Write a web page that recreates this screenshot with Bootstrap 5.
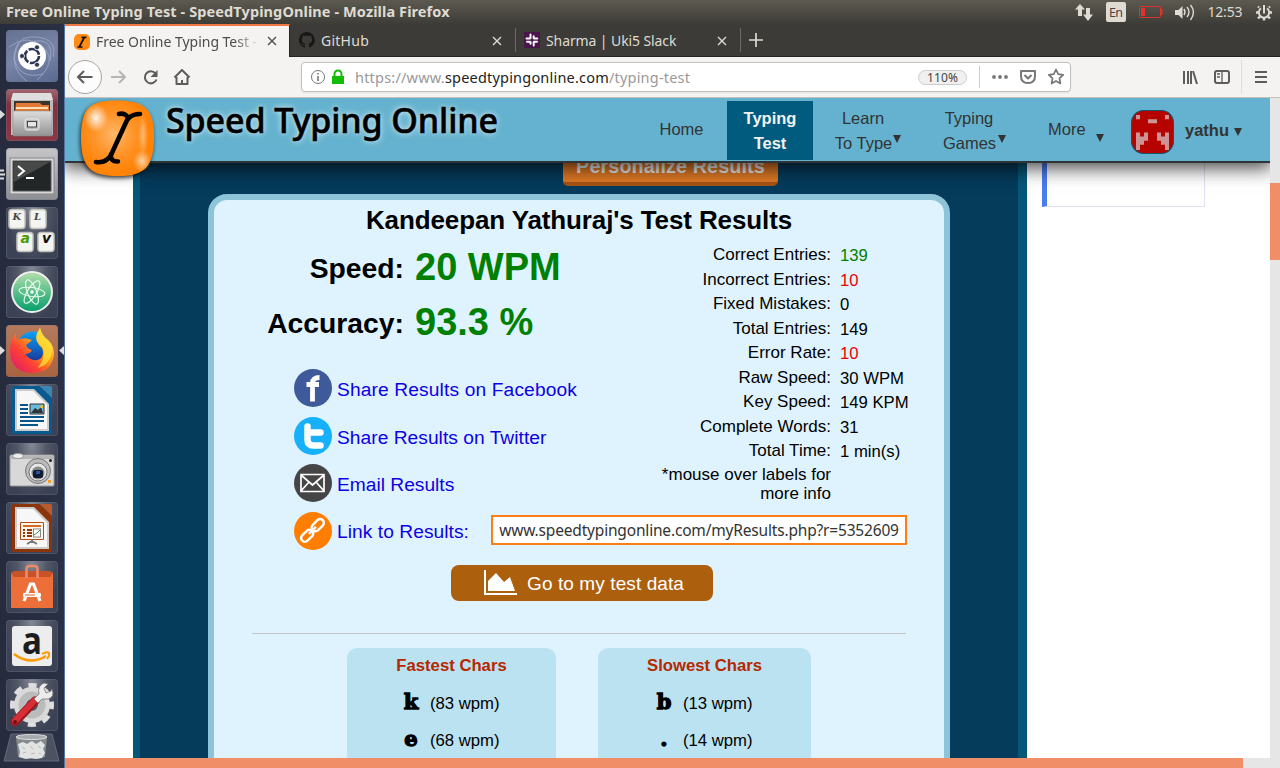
<!DOCTYPE html>
<html lang="en">
<head>
<meta charset="utf-8">
<meta name="viewport" content="width=device-width, initial-scale=1">
<title>Free Online Typing Test - SpeedTypingOnline</title>
<link href="https://cdn.jsdelivr.net/npm/bootstrap@5.3.0/dist/css/bootstrap.min.css" rel="stylesheet">
<style>
body{width:1280px;height:768px;overflow:hidden;font-family:"Liberation Sans",Arial,sans-serif;color:#000;background:#fff;line-height:1.2}
svg{display:block;flex:none;overflow:visible}
.ui{font-family:"Noto Sans","Open Sans",sans-serif}
.panel-top{height:24px;background:linear-gradient(#5c5a50,#3d3c37);color:#dfdbd2;padding-left:6px;padding-right:7px}
.panel-top .wtitle{font-weight:700;font-size:14.5px;letter-spacing:.1px;white-space:nowrap}
.dock{width:65px;height:744px;background:linear-gradient(90deg,#262b3e,#2a3045);border-right:1px solid #5576a5;padding:6px 0 0 6px;gap:7px}
.tile{width:52px;height:52px;border-radius:4px;position:relative;background:radial-gradient(ellipse at 50% 0,#858998 0,#525767 40%,#3c4255 75%);box-shadow:inset 0 0 0 1px #70758555}
.tile.bfb{background:linear-gradient(160deg,#64718f,#7985a8 50%,#596991)}
.tile.files{background:linear-gradient(#a26872,#823140 30%,#8d3644)}
.tile.term{background:linear-gradient(#c6c6c8,#8e8f94)}
.tile.fox{background:linear-gradient(#b77a5d,#a9633f)}
.pip{position:absolute;left:-6px;top:21px}
.pip-r{position:absolute;left:53px;top:21px}
.bin{margin-top:-5px;margin-left:-3px}
.tabs{height:33px;background:#3c3b37;border-bottom:1px solid #252421;color:#dfdbd2;font-size:14px}
.tab-item{width:225px;padding-left:9px;position:relative;height:32px}
.tab-item .lbl{margin-left:6px;white-space:nowrap;letter-spacing:-.1px;line-height:20px}
.tab-item .x{position:absolute;left:202px;top:12px}
.tab-item.on{background:#f4f3f2;color:#4c4c4c;height:33px;border-top:2px solid #f07746;border-right:1px solid #252421;width:225px}
.tab-item.on .lbl{width:163px;letter-spacing:-.02px;-webkit-mask-image:linear-gradient(90deg,#000 85%,transparent)}
.tab-item.on .x{top:10px}
.vsep{width:1px;height:24px;background:#6b6965}
.toolbar{height:41px;background:#f4f3f2;border-bottom:1px solid #c4c0bb;padding-left:3px}
.backbtn{width:34px;height:34px;border:1px solid #a5a5a5;border-radius:50%;background:#fcfcfc}
.urlbar{width:770px;height:30px;background:#fff;border:1px solid #c3c1be;border-radius:4px;margin-left:99px;padding-left:9px;font-size:14.5px;color:#999;box-shadow:0 1px 2px #0001}
.urlbar b{font-weight:400;color:#222}
.urltxt{margin-left:10px;width:563px;letter-spacing:.2px;white-space:nowrap;padding-top:1px}
.zoomlvl{width:49px;height:15px;border:1px solid #ccc;border-radius:8px;background:#f0f0f0;color:#444;font-size:12px;line-height:14px;letter-spacing:.1px}
.view{width:1205px;height:660px;position:relative;overflow:hidden;background:#fff}
.vscroll{width:10px;height:660px;background:#e6e6e6;padding-top:85px}
.vscroll div{height:77px;background:#f08e67}
.hscroll{height:10px;background:#e6e6e6}
.hscroll div{width:1178px;height:10px;background:#f08e67}
.site-head{position:absolute;left:0;top:0;width:1205px;height:65px;background:#64b2cf;border-bottom:2px solid #2f3436;box-shadow:0 3px 18px 2px #000b;z-index:5;color:#333;font-size:16.5px;line-height:25px;padding-left:13px}
.brand-txt{font-family:"Noto Sans","Open Sans",sans-serif;font-weight:500;font-size:34px;line-height:46px;margin-top:-1px;letter-spacing:-.1px;color:#000;margin-left:8px;width:400px;text-shadow:0 0 5px #fff9,0 0 8px #fff8;-webkit-text-stroke:.6px #000;white-space:nowrap}
.m-cur{width:86px;height:59px;background:#005b7f;color:#f2f2f2;font-weight:700;padding-top:5px}
.m-two{padding-top:8px}
.down{display:inline-block;width:0;height:0;border:4.5px solid transparent;border-top:8px solid #333;border-bottom:0}
.site-body{margin-left:68px;width:894px;height:660px;background:#053b5b;border-left:7px solid #055777;border-right:9px solid #055777;padding-left:68px}
.personal{margin-left:355px;width:215px;height:88px;background:#dd7826;border-bottom:4px solid #a65315;border-radius:5px;color:#eee;font-weight:700;font-size:19.8px;line-height:24px;padding-top:56px;text-align:center;letter-spacing:.1px}
.results{width:742px;height:600px;margin-top:8px;border:6px solid #8ec4d8;border-radius:19px;background:#dff3ff}
.results h1{font-size:26px;font-weight:700;height:40px;padding-top:4px;margin:0;line-height:32px;letter-spacing:-.12px;text-align:center}
.big{height:55px}
.big .k{width:190px;text-align:right;font-weight:700;font-size:28.3px;padding-top:3px}
.big .v{margin-left:11px;color:green;font-weight:700;font-size:38px}
.share{height:47.7px;margin-left:80px;color:#0d00e6;font-size:19.2px;letter-spacing:.13px}
.share span{margin-left:5px;padding-top:2px}
.stats{width:310px;font-size:17px;padding-top:3px}
.stats .r{height:24.5px}
.stats .k{width:197px;text-align:right}
.stats .v{margin-left:9px;padding-top:2px;font-size:16.7px}
.note{width:197px;text-align:right;font-size:17px;line-height:19px;padding-top:1px}
.linkbox{width:416px;height:30px;border:2px solid #ff7e14;background:#fff;color:#333;font-size:15.5px;line-height:27px;text-align:center;white-space:nowrap;letter-spacing:-.18px;margin-top:-2px}
.godata{width:262px;height:36px;border-radius:8px;background:#ac5f0d;color:#fff;font-size:19px;margin:10px 0 0 237px;padding-left:33px;letter-spacing:.1px}
.rule{height:1px;background:#c6c6c6;margin:32px 38px 14px}
.chars{height:200px;background:#bbe2f0;border-radius:10px 10px 0 0;font-size:16.7px}
.chars h2{font-size:16.7px;font-weight:700;color:#b52800;text-align:center;margin:0;padding-top:8px;height:38px;line-height:20px}
.chars .c{height:37px}
.glyph{width:24px;text-align:center;font-family:"DejaVu Serif",serif;font-weight:700;font-size:21px;line-height:24px;margin-top:-6px;-webkit-text-stroke:1.3px #000}
.adbox{position:absolute;left:977px;top:40px;width:163px;height:69px;border:1px solid #e0e0f2;border-left:5px solid #4a7cf0}
</style>
</head>
<body>
<div class="panel-top d-flex align-items-center ui">
  <div class="wtitle flex-grow-1">Free Online Typing Test - SpeedTypingOnline - Mozilla Firefox</div>
  <svg width="198" height="24" viewBox="0 0 198 24">
    <g fill="#dfdbd2"><path d="M0 9.500 5 4l5 5.500H7V16H3V9.500zM8 14.500h3V8h4v6.500h3L13 21z"/><rect x="31" y="2" width="20" height="20" rx="2"/>
    <path d="M100 10h3.500l4-4v13l-4-4H100z"/></g>
    <text x="34" y="17" font-size="12.500" textLength="14" fill="#444">En</text>
    <rect x="64.500" y="6.500" width="21" height="11" rx="1" fill="none" stroke="#e0322b"/><path d="M66 8h4v8h-4zM86 9h1.500v6H86z" fill="#e0322b"/>
    <path d="M109 9q2 3 0 6M112 7q4 5 0 10M115.500 5q6 7 0 15" fill="none" stroke="#dfdbd2" stroke-width="1.400"/>
    <text x="132.500" y="17" font-size="14" textLength="35" fill="#dfdbd2">12:53</text>
    <g transform="translate(189 12.500)" stroke="#dfdbd2" fill="none"><path d="M-3-4.200A5.200 5.200 0 1 0 3-4.200" stroke-width="2"/><path d="M0-7.500V1" stroke-width="2"/><path d="M-5-5-6-6M5-5 6-6M-8 0h2M6 0h2M-4 4-6 6M4 4 6 6M0 5v3" stroke-width="2.400"/></g>
  </svg>
</div>
<div class="d-flex">
  <aside class="dock d-flex flex-column flex-shrink-0">
    <div class="tile bfb"><svg width="52" height="52"><g fill="none" stroke="#a7b0cc" stroke-width="1" opacity=".7"><path d="M3 17Q22 3 37 17T31 50M8 30Q8 5 30 7T47 27M8 28Q13 50 37 44M13 13Q1 37 21 51M24 12Q49 6 44 31"/></g><circle cx="26" cy="26" r="14" fill="#fff"/><circle cx="26" cy="26" r="7" fill="none" stroke="#2c3554" stroke-width="2.600" stroke-dasharray="13 1.660"/><g fill="#2c3554" stroke="#fff" stroke-width=".8"><circle cx="16" cy="26" r="2.500"/><circle cx="31" cy="17.300" r="2.500"/><circle cx="31" cy="34.700" r="2.500"/></g></svg></div>
    <div class="tile files"><svg class="pip" width="6" height="9"><path d="M0 0 5 4.500 0 9z" fill="#ddd"/></svg><svg width="52" height="52"><defs><linearGradient id="gr" x2="0" y2="1"><stop stop-color="#ddd"/><stop offset="1" stop-color="#929292"/></linearGradient></defs><path d="M7 4h38l2 8v34H5V12z" fill="#bbb"/><path d="M7 4h38l2 7H5z" fill="#dedede"/><path d="M8 12h36v12H8z" fill="#3c342f"/><path d="M10 14h24l2 2h7v7H9z" fill="#e17a36"/><path d="M10 18h32v2H10z" fill="#ffe0b6"/><path d="M7 22h39v25H7z" fill="url(#gr)" stroke="#888" stroke-width=".5"/><rect x="19" y="30" width="14" height="11" rx="2" fill="#bbb" stroke="#eee"/><rect x="21.500" y="32.500" width="9" height="5.500" fill="#e6e6e6" stroke="#444"/></svg></div>
    <div class="tile term"><svg class="pip" width="6" height="11"><path d="M0 1.500h4M0 5.500h5M0 9.500h4" stroke="#ddd" stroke-width="2"/></svg><svg width="52" height="52"><rect x="4" y="10" width="44" height="36" fill="#d6d6d6" stroke="#888"/><rect x="7" y="13" width="38" height="30" fill="#232626" stroke="#555"/><path d="M8 14h36L8 34z" fill="#474949"/><path d="M12 18l6 5-6 5M20 30h8" fill="none" stroke="#fff" stroke-width="2"/></svg></div>
    <div class="tile"><svg width="52" height="52" font-family="DejaVu Serif,serif" font-weight="700" font-style="italic" font-size="11"><g fill="#f4f4f0" stroke="#c1c3ba" stroke-width="1.500"><rect x="3" y="2.500" width="16" height="19" rx="3"/><rect x="24" y="2.500" width="16" height="19" rx="3"/><rect x="11" y="25.500" width="16" height="19" rx="3"/><rect x="32" y="25.500" width="16" height="19" rx="3"/></g><g fill="#444"><text x="6.500" y="13" font-size="10">K</text><text x="28" y="13" font-size="10">L</text><text x="14.500" y="36" font-size="14" font-family="DejaVu Sans,sans-serif" fill="#499b05">a</text><text x="36" y="36" font-size="14" font-family="DejaVu Sans,sans-serif" fill="#111">v</text></g></svg></div>
    <div class="tile"><svg width="52" height="52"><defs><linearGradient id="at" x2="0" y2="1"><stop stop-color="#b5dfab"/><stop offset="1" stop-color="#039e6b"/></linearGradient></defs><circle cx="26" cy="26" r="20" fill="url(#at)" stroke="#eee" stroke-width="2"/><g fill="none" stroke="#e9fff0" stroke-width="1.100"><ellipse cx="26" cy="26" rx="13" ry="4.500" transform="rotate(8 26 26)"/><ellipse cx="26" cy="26" rx="13" ry="4.500" transform="rotate(68 26 26)"/><ellipse cx="26" cy="26" rx="13" ry="4.500" transform="rotate(122 26 26)"/></g><circle cx="26" cy="26" r="1.700" fill="#fff"/></svg></div>
    <div class="tile fox"><svg class="pip" width="6" height="9"><path d="M0 0 5 4.500 0 9z" fill="#ddd"/></svg><svg class="pip-r" width="6" height="9"><path d="M5 0 0 4.500 5 9z" fill="#ddd"/></svg><svg width="52" height="52"><defs><linearGradient id="ff" x1="1" y1="0" x2="0" y2="1"><stop offset=".1" stop-color="#fff04c"/><stop offset=".4" stop-color="#ff9b1a"/><stop offset=".65" stop-color="#ff4034"/><stop offset="1" stop-color="#d9127c"/></linearGradient><linearGradient id="bl" x2="0" y2="1"><stop stop-color="#0ba0f5"/><stop offset="1" stop-color="#183596"/></linearGradient></defs><circle cx="27" cy="22" r="15.500" fill="url(#bl)"/><path d="M10 8Q9 12 11 15Q18 12 22 14L26 15Q23 18 20 20Q21 24 26 25Q24 29 19 29Q26 38 34 34Q39 30 36 23Q28 16 31 9L34 3Q36 11 42 15Q48 20 48 29Q46 48 26 48Q5 47 4 27Q4 15 10 8Z" fill="url(#ff)"/><path d="M34 3Q36 11 42 15Q48 22 45 31Q42 40 32 43Q40 32 37 23Q28 16 31 8Z" fill="#ffdc35" opacity=".8"/></svg></div>
    <div class="tile"><svg width="52" height="52"><path d="M8 2H36L50 14V48Q50 50 48 50H8Q6 50 6 48V4Q6 2 8 2Z" transform="matrix(.909 0 0 1 .545 0)" fill="#075b91"/><path d="M34 2H44Q46 2 46 4V14Z" fill="#3a86b5"/><path d="M9 5H28L43 20V47H9Z" fill="#ccc"/><path d="M11 7H27L41 21V45H11Z" fill="#f7f7f7"/><path d="M14 21h8M14 25h8M14 29h8M14 33h24M14 37h24M14 41h18" stroke="#07568a" stroke-width="2"/><path d="M24 20h14v10H24z" fill="#69b9df" stroke="#333"/><path d="M25 29l4-5 3 2 3-3 2 6z" fill="#333"/><path d="M35 21h2v3h-3z" fill="#e8c32d"/></svg></div>
    <div class="tile"><svg width="52" height="52"><rect x="4" y="12" width="44" height="31" rx="1" fill="#d8d8d8" stroke="#999"/><path d="M5 13h42v3H5z" fill="#b5b5b5"/><ellipse cx="12" cy="13" rx="5.500" ry="2.500" fill="#eee" stroke="#999"/><circle cx="32" cy="28" r="12.500" fill="#bbb" stroke="#777"/><circle cx="32" cy="29" r="9" fill="#e6e6e6" stroke="#777"/><circle cx="32" cy="30" r="6.500" fill="#888"/><rect x="27" y="27" width="10" height="8" rx="2" fill="#101b32"/><path d="M30 28h4v3h-4z" fill="#2755a0"/><circle cx="44.500" cy="17.500" r="1.500" fill="#222"/><path d="M42 37h3v3h-3z" fill="#f39f29"/></svg></div>
    <div class="tile"><svg width="52" height="52"><path d="M8 2H36L50 14V48Q50 50 48 50H8Q6 50 6 48V4Q6 2 8 2Z" transform="matrix(.909 0 0 1 .545 0)" fill="#8c350b"/><path d="M34 2H44Q46 2 46 4V14Z" fill="#ba5b2e"/><path d="M9 5H28L43 20V47H9Z" fill="#ccc"/><path d="M11 7H27L41 21V45H11Z" fill="#f7f7f7"/><path d="M14.500 20.500h23v17h-23z" fill="#fff5ec" stroke="#b64a12"/><path d="M17 24h18" stroke="#d66a20" stroke-width="2"/><path d="M17 28h2M17 31h2M17 34h2M21 28h5M21 31h5M21 34h5" stroke="#963709" stroke-width="2"/><rect x="27.500" y="27" width="7" height="8" fill="#fff" stroke="#888"/><path d="M28 33l3-2 3-3" stroke="#29a34c" fill="none"/><path d="M26 37v2l-5 3M26 39l5 3" stroke="#777" stroke-width="2" fill="none"/></svg></div>
    <div class="tile"><svg width="52" height="52"><path d="M5 12h42v35H5z" fill="#ec6f3a"/><path d="M5 12 8 10h36l3 2-3 4H8z" fill="#c95329"/><path d="M20.500 17V8q0-3 3-3h5q3 0 3 3v9" fill="none" stroke="#ee8a69" stroke-width="2.600"/><path d="M18 40 24.500 23h3L34 40" stroke="#fff" stroke-width="3.200" fill="none"/><rect x="17" y="32" width="18" height="4" rx="1" fill="#fff"/><path d="M19 34h10" stroke="#e06428"/></svg></div>
    <div class="tile"><svg width="52" height="52"><rect x="6" y="6" width="40" height="40" rx="3" fill="#ededed"/><text x="16" y="34" font-family="Open Sans,sans-serif" font-size="38" font-weight="700" textLength="20" lengthAdjust="spacingAndGlyphs" fill="#1d1d1d">a</text><path d="M8 34Q24 46 40 36" stroke="#ff9900" stroke-width="2.600" fill="none"/><path d="M36 34q5-3 7-1 1 2-2 6" fill="none" stroke="#ff9900" stroke-width="2"/></svg></div>
    <div class="tile"><svg width="52" height="52"><circle cx="26" cy="26" r="19" fill="none" stroke="#dedede" stroke-width="6" stroke-dasharray="7.900 7.020" stroke-dashoffset="4"/><circle cx="26" cy="26" r="12" fill="none" stroke="#d9d9d9" stroke-width="12"/><circle cx="26" cy="26" r="10" fill="none" stroke="#bbb" stroke-width="7"/><path d="M9 43 29 22" stroke="#961c21" stroke-width="9" stroke-linecap="round"/><path d="M9 42 29 21" stroke="#d82e35" stroke-width="6" stroke-linecap="round"/><path d="M28 20 33 15Q31 7 38 4L42 5 38 9 40 14 45 12 46 10Q49 18 42 20H36L32 24Z" fill="#ececec" stroke="#777" stroke-width=".8"/><circle cx="9" cy="43" r="2" fill="#6e1014"/></svg></div>
    <svg class="bin" width="60" height="32"><path d="M8 1h41l7 27H1z" fill="#4d5263" stroke="#656a79"/><path d="M13 4h31l-2 20q-13 4-27 0z" fill="#858b8e"/><ellipse cx="28.500" cy="4" rx="15.500" ry="2.500" fill="#a5abad" stroke="#ddd"/><path d="M15 11l5-2 4 2 5-3 4 3 5-3 4 4-2 4 2 4-3 5-6 1-5-1-5 1-7-2 1-5z" fill="#e2e4e3"/><path d="M19 14l3 2M27 13l3 3M35 13l3 2M20 20l3-1M28 21l4-1M36 20l2 1" stroke="#b5b8b8" fill="none"/></svg>
  </aside>

  <main>
    <nav class="tabs d-flex ui">
      <div class="tab-item on d-flex align-items-center"><svg width="16" height="16"><rect width="16" height="16" rx="5" fill="#ff8b16"/><path d="M5.500 12.500 10 4M3.500 13h5M7.500 3.300h5" stroke="#111" stroke-width="1.700" fill="none"/></svg><span class="lbl">Free Online Typing Test -</span><svg class="x" width="10" height="10"><path d="M1 1l8 8M9 1 1 9" stroke="#555" stroke-width="1.500"/></svg></div>
      <div class="tab-item d-flex align-items-center"><svg width="16" height="16" viewBox="0 0 16 16"><path fill="#171717" d="M8 0C3.600 0 0 3.600 0 8c0 3.500 2.300 6.500 5.500 7.600.4.100.5-.2.500-.4v-1.500c-2.200.5-2.700-.9-2.700-.9-.4-.9-.9-1.200-.9-1.200-.7-.5.100-.5.100-.5.800.1 1.200.8 1.200.8.700 1.200 1.900.9 2.300.7.100-.5.300-.9.500-1.100-1.800-.2-3.600-.9-3.600-4 0-.9.300-1.600.8-2.100-.1-.2-.4-1 .1-2.100 0 0 .7-.2 2.200.8a7.400 7.400 0 0 1 4 0c1.500-1 2.200-.8 2.200-.8.400 1.100.2 1.900.1 2.100.5.500.8 1.200.8 2.100 0 3.100-1.900 3.700-3.700 3.900.3.300.6.800.6 1.500v2.200c0 .2.100.5.600.4A8 8 0 0 0 8 0"/></svg><span class="lbl" style="letter-spacing:.25px;padding-top:1px">GitHub</span><svg class="x" width="10" height="10"><path d="M1 1l8 8M9 1 1 9" stroke="#dfdbd2" stroke-width="1.400"/></svg></div>
      <div class="vsep mt-1"></div>
      <div class="tab-item d-flex align-items-center" style="width:224px;padding-left:8px"><svg width="16" height="16"><path d="M0 0h16v16H0z" fill="#4a154b"/><path d="M6.500 2.500v3.700M9.700 4.300v1.900M2.500 6.500h3.300M10 6.500h3.300M3 9.700h3M10 9.700h3M6.500 10v1.700M9.700 10v3.500" stroke="#fff" stroke-width="2" stroke-linecap="round"/></svg><span class="lbl" style="padding-top:1px">Sharma | Uki5 Slack</span><svg class="x" style="left:201px" width="10" height="10"><path d="M1 1l8 8M9 1 1 9" stroke="#dfdbd2" stroke-width="1.400"/></svg></div>
      <div class="vsep mt-1"></div>
      <svg class="mt-2 ms-2" width="16" height="16"><path d="M7 1v14M0 8h14" stroke="#dfdbd2" stroke-width="1.700"/></svg>
    </nav>
    <div class="toolbar d-flex align-items-center ui">
      <div class="backbtn d-flex align-items-center justify-content-center"><svg width="16" height="16"><path d="M15.500 8H1M7 2 1 8l6 6" fill="none" stroke="#5c5c5c" stroke-width="2"/></svg></div>
      <svg width="92" height="18" class="ms-2"><path d="M1 9h14M9 3l6 6-6 6" fill="none" stroke="#b5b5b5" stroke-width="2"/><g transform="translate(32 0)"><path d="M13.500 5.500A6 6 0 1 0 14.500 11.500" fill="none" stroke="#5c5c5c" stroke-width="2"/><path d="M15.500 2v7h-7z" fill="#5c5c5c"/></g><path d="M64.500 9.500l7.500-7.500 7.500 7.500M66.500 9v7h11V9M72 16v-4" fill="none" stroke="#5c5c5c" stroke-width="2" stroke-linejoin="round"/></svg>
      <div class="urlbar d-flex align-items-center">
        <svg width="34" height="16"><circle cx="7" cy="8" r="6.500" fill="none" stroke="#777"/><path d="M7 7v5M7 4v1.600" stroke="#777" stroke-width="1.600"/><path d="M21 7h12v8H21z" fill="#12bc00"/><path d="M23.500 8V5a3.500 3.500 0 0 1 7 0v3" fill="none" stroke="#12bc00" stroke-width="2"/></svg>
        <div class="urltxt">https://www.<b>speedtypingonline.com</b>/typing-test</div>
        <div class="zoomlvl text-center">110%</div>
        <svg width="90" height="24" class="ms-2"><path d="M4.500 1v22" stroke="#ccc"/><g fill="#777"><circle cx="19" cy="12" r="1.900"/><circle cx="25" cy="12" r="1.900"/><circle cx="31" cy="12" r="1.900"/></g><g fill="none" stroke="#777" stroke-width="2" stroke-linejoin="round"><path d="M46 6h14v5q0 7-7 7t-7-7zM49.500 10l3.500 3.500 3.500-3.500"/><path d="M81 4.500l2.200 4.600 5 .7-3.700 3.500.9 5.200L81 16l-4.400 2.500.9-5.200-3.700-3.500 5-.7z" stroke-width="1.700"/></g></svg>
      </div>
      <svg width="94" height="34" style="margin-left:111px"><g stroke="#5c5c5c" stroke-width="2" fill="none"><path d="M2 11v13M6 11v13M9 11v13M11 11l4 13"/><rect x="33" y="11" width="14" height="12" rx="2"/><path d="M40 11v12M35 14h3M35 17h3" stroke-width="1.300"/><path d="M73 12h12M73 17h12M73 22h12"/></g><path d="M59.500 0v34" stroke="#ddd"/></svg>
    </div>

    <div class="d-flex">
      <div class="view">
        <header class="site-head d-flex">
          <svg width="80" height="84" viewBox="0 0 80 84"><defs><radialGradient id="or" cx=".45" cy=".45"><stop stop-color="#ffb76b"/><stop offset=".55" stop-color="#ff9429"/><stop offset="1" stop-color="#ff8307"/></radialGradient><radialGradient id="hi"><stop stop-color="#fff" stop-opacity=".9"/><stop offset="1" stop-color="#fff" stop-opacity="0"/></radialGradient></defs><path d="M39 2.500C66 2.500 76 10 76 39S67 78 41 78 3 72 3 40 13 2.500 39 2.500Z" fill="url(#or)" style="filter:drop-shadow(-1px 2px 2px #000b)"/><ellipse cx="18" cy="20" rx="12" ry="14" fill="url(#hi)"/><ellipse cx="64" cy="63" rx="9" ry="11" fill="url(#hi)" opacity=".7"/><ellipse cx="65" cy="37" rx="5" ry="22" fill="url(#hi)" opacity=".45"/><path d="M41 16Q44 15 47 16.500T50 21Q54 16 62 16M50 20 33 57M18 64Q25 65 29 61.500T33 56Q32 64 40 63.500" fill="none" stroke="#000" stroke-width="4.600" stroke-linecap="round" stroke-linejoin="round"/></svg>
          <div class="brand-txt">Speed Typing Online</div>
          <div class="d-flex" style="margin-left:90px">
            <div class="text-center" style="width:49px;margin-left:1px;padding-top:19px">Home</div>
            <div class="m-cur text-center" style="margin:3px 0 0 21px">Typing<br>Test</div>
            <div class="m-two text-center" style="width:100px">Learn<br><span class="text-nowrap">To Type<i class="down" style="margin:0 -10px 6px 1px"></i></span></div>
            <div class="m-two text-center" style="width:112px">Typing<br><span class="text-nowrap">Games<i class="down" style="margin:0 -11px 6px 2px"></i></span></div>
            <div class="text-nowrap" style="width:106px;padding:19px 0 0 23px">More<i class="down" style="margin:0 0 -7px 10px"></i></div>
            <svg width="43" height="44" viewBox="0 0 43 43" preserveAspectRatio="none" style="margin:12px 0 0 0"><rect x=".5" y=".5" width="42" height="42" rx="12" fill="#b50400" stroke="#15566f"/><path d="M5 5h4v4H5zM34 5h4v4h-4zM17 9h9v4h-9zM5 22h4v4h4v-4h4v8h-4v4H9v5H5zM26 22h4v4h4v-4h4v17h-4v-5h-4v-4h-4z" fill="#ce9394"/></svg>
            <div class="fw-bold text-nowrap" style="padding:20px 0 0 11px">yathu<i class="down" style="margin-left:5px"></i></div>
          </div>
        </header>
        <div class="site-body">
          <div class="personal">Personalize Results</div>
          <section class="results">
            <h1>Kandeepan Yathuraj's Test Results</h1>
            <div class="d-flex" style="height:267px">
              <div style="width:420px">
                <div class="big d-flex align-items-center"><div class="k">Speed:</div><div class="v">20 WPM</div></div>
                <div class="big d-flex align-items-center"><div class="k">Accuracy:</div><div class="v">93.3 %</div></div>
                <div style="height:14px"></div>
                <div class="share d-flex align-items-center"><svg width="38" height="38"><circle cx="19" cy="19" r="19" fill="#3e5a9a"/><path d="M18.500 32.500V14q0-5.500 7-5.500M12.500 15.500h12.500" fill="none" stroke="#fff" stroke-width="4.800"/></svg><span style="padding-top:3px">Share Results on Facebook</span></div>
                <div class="share d-flex align-items-center"><svg width="38" height="38"><circle cx="19" cy="19" r="19" fill="#17b1fb"/><path d="M13.500 9.500v13q0 6 6 6h7M13.500 15.500h13" fill="none" stroke="#fff" stroke-width="6.500" stroke-linecap="round"/></svg><span style="padding-top:3px;letter-spacing:.03px">Share Results on Twitter</span></div>
                <div class="share d-flex align-items-center"><svg width="38" height="38"><circle cx="19" cy="19" r="19" fill="#454545"/><path d="M7 10.500h23v17H7zM7 11l11.500 10L30 11M7 27l8-9M30 27l-8-9" fill="none" stroke="#fff" stroke-width="1.700"/></svg><span style="letter-spacing:0">Email Results</span></div>
              </div>
              <div class="stats">
                <div class="r d-flex align-items-center"><div class="k">Correct Entries:</div><div class="v" style="color:green">139</div></div>
                <div class="r d-flex align-items-center"><div class="k">Incorrect Entries:</div><div class="v" style="color:#e00">10</div></div>
                <div class="r d-flex align-items-center"><div class="k">Fixed Mistakes:</div><div class="v">0</div></div>
                <div class="r d-flex align-items-center"><div class="k">Total Entries:</div><div class="v">149</div></div>
                <div class="r d-flex align-items-center"><div class="k">Error Rate:</div><div class="v" style="color:#e00">10</div></div>
                <div class="r d-flex align-items-center"><div class="k">Raw Speed:</div><div class="v">30 WPM</div></div>
                <div class="r d-flex align-items-center"><div class="k">Key Speed:</div><div class="v">149 KPM</div></div>
                <div class="r d-flex align-items-center"><div class="k">Complete Words:</div><div class="v">31</div></div>
                <div class="r d-flex align-items-center"><div class="k">Total Time:</div><div class="v">1 min(s)</div></div>
                <div class="note">*mouse over labels for<br>more info</div>
              </div>
            </div>
            <div class="d-flex align-items-center" style="height:48px">
              <div class="share d-flex align-items-center" style="width:197px"><svg width="38" height="38"><circle cx="19" cy="19" r="19" fill="#ff7e00"/><g fill="none" stroke="#fff" stroke-width="2.500" transform="rotate(-45 19 19)"><rect x="4.500" y="14.500" width="14" height="7.500" rx="3.750"/><rect x="19.500" y="14.500" width="14" height="7.500" rx="3.750"/><path d="M14 18.200h10" stroke-width="2.500"/></g></svg><span style="letter-spacing:.05px">Link to Results:</span></div>
              <div class="linkbox ui">www.speedtypingonline.com/myResults.php?r=5352609</div>
            </div>
            <div class="godata d-flex align-items-center"><svg width="34" height="26"><path d="M1 0v24h32" fill="none" stroke="#fff" stroke-width="2"/><path d="M4 21V11l8-8 8 9 6-5 5 14z" fill="#fff"/></svg><span style="margin-left:9px;padding-top:2px">Go to my test data</span></div>
            <div class="rule"></div>
            <div class="d-flex" style="padding-left:133px;gap:42px">
              <div class="chars" style="width:209px"><h2>Fastest Chars</h2>
                <div class="c d-flex align-items-center"><div class="glyph" style="margin-left:52px">k</div><span style="margin-left:7px">(83 wpm)</span></div>
                <div class="c d-flex align-items-center"><div class="glyph" style="margin-left:52px">e</div><span style="margin-left:7px">(68 wpm)</span></div></div>
              <div class="chars" style="width:213px"><h2>Slowest Chars</h2>
                <div class="c d-flex align-items-center"><div class="glyph" style="margin-left:54px">b</div><span style="margin-left:7px">(13 wpm)</span></div>
                <div class="c d-flex align-items-center"><div class="glyph" style="margin-left:54px">.</div><span style="margin-left:7px">(14 wpm)</span></div></div>
            </div>
          </section>
        </div>
        <div class="adbox"></div>
      </div>
      <div class="vscroll"><div></div></div>
    </div>
    <div class="hscroll"><div></div></div>
  </main>
</div>
<script src="https://cdn.jsdelivr.net/npm/bootstrap@5.3.0/dist/js/bootstrap.bundle.min.js"></script>
</body>
</html>
